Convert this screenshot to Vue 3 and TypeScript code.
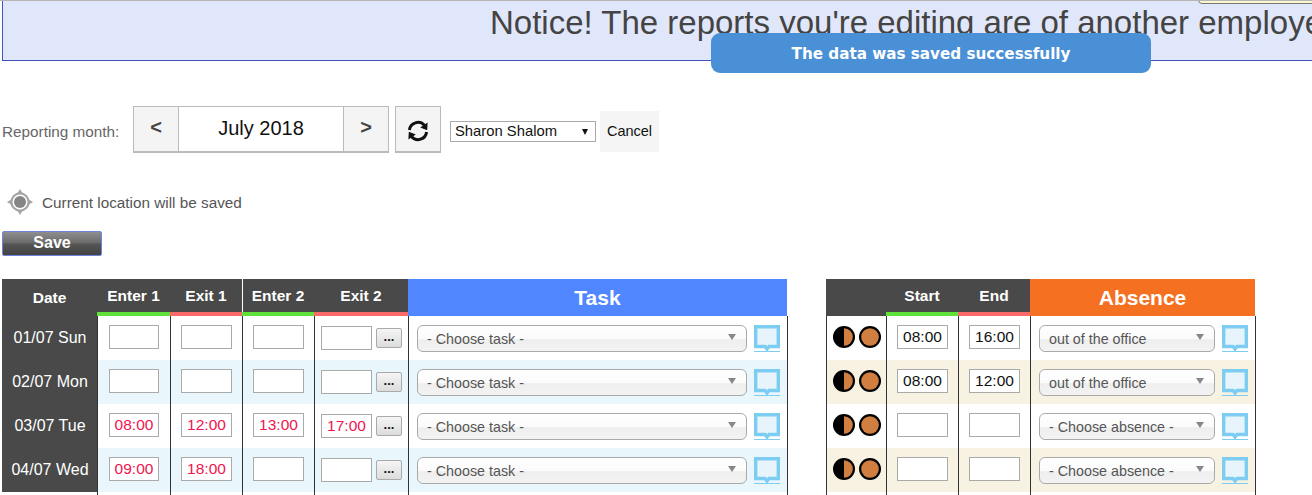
<script setup lang="ts">
interface WorkRow {
  date: string
  times: string[]
}
interface AbsenceRow {
  start: string
  end: string
  absence: string
}

const workRows: WorkRow[] = [
  { date: '01/07 Sun', times: ['', '', '', ''] },
  { date: '02/07 Mon', times: ['', '', '', ''] },
  { date: '03/07 Tue', times: ['08:00', '12:00', '13:00', '17:00'] },
  { date: '04/07 Wed', times: ['09:00', '18:00', '', ''] }
]

const absenceRows: AbsenceRow[] = [
  { start: '08:00', end: '16:00', absence: 'out of the office' },
  { start: '08:00', end: '12:00', absence: 'out of the office' },
  { start: '', end: '', absence: '- Choose absence -' },
  { start: '', end: '', absence: '- Choose absence -' }
]
</script>

<template>
  <div class="page">
    <div class="notice">Notice! The reports you're editing are of another employee</div>
    <div class="corner-tip"></div>
    <div class="toast">The data was saved successfully</div>

    <div class="month-row">
      <span class="month-label">Reporting month:</span>
      <div class="month-picker">
        <button class="nav-btn">&lt;</button>
        <div class="month-name">July 2018</div>
        <button class="nav-btn">&gt;</button>
      </div>
      <button class="refresh-btn">
        <svg width="24" height="24" viewBox="0 0 24 24" fill="none">
          <path d="M3.4 11A8.7 8.7 0 0 1 18.4 6.2" stroke="#111" stroke-width="3" />
          <path d="M21.6 3.6l-.4 7.6-7-2.6z" fill="#111" />
          <path d="M20.6 13A8.7 8.7 0 0 1 5.6 17.8" stroke="#111" stroke-width="3" />
          <path d="M2.4 20.4l.4-7.6 7 2.6z" fill="#111" />
        </svg>
      </button>
      <div class="employee-wrap">
        <select class="employee">
          <option>Sharon Shalom</option>
        </select>
      </div>
      <button class="cancel-btn">Cancel</button>
    </div>

    <div class="location">
      <svg width="26" height="26" viewBox="0 0 26 26">
        <path d="M13 0l2.5 4h-5zM13 26l-2.5-4h5zM0 13l4-2.5v5zM26 13l-4 2.5v-5z" fill="#a8a8a8" />
        <circle cx="13" cy="13" r="8.6" fill="none" stroke="#a5a5a5" stroke-width="2.2" />
        <circle cx="13" cy="13" r="6" fill="#858585" />
      </svg>
      <span>Current location will be saved</span>
    </div>

    <button class="save-btn">Save</button>

    <div class="tables">
      <table class="grid work">
        <colgroup>
          <col style="width: 95px" />
          <col style="width: 73px" />
          <col style="width: 72px" />
          <col style="width: 72px" />
          <col style="width: 94px" />
          <col style="width: 380px" />
        </colgroup>
        <thead>
          <tr>
            <th class="date-head">Date</th>
            <th class="enter">Enter 1</th>
            <th class="exit">Exit 1</th>
            <th class="enter split">Enter 2</th>
            <th class="exit">Exit 2</th>
            <th class="big task-head">Task</th>
          </tr>
        </thead>
        <tbody>
          <tr v-for="row in workRows" :key="row.date">
            <td class="date-cell">{{ row.date }}</td>
            <td v-for="i in 3" :key="i" class="time-cell">
              <input class="time late" :value="row.times[i - 1]" />
            </td>
            <td class="last-time">
              <div class="last-line">
                <input class="time late" :value="row.times[3]" />
                <button class="more-btn">...</button>
              </div>
            </td>
            <td class="pick-cell">
              <div class="pick-line">
                <div class="pick task-pick">
                  <span>- Choose task -</span>
                  <i class="arrow"></i>
                </div>
                <svg class="note" width="26" height="27" viewBox="0 0 26 27">
                  <path d="M1.7 1.7h22.6v19.8H15l-2 2.5-2-2.5H1.7z" fill="#e8f4fb" stroke="#7dcdf2" stroke-width="3.4" />
                  <path d="M0 26.5h26" stroke="#7dcdf2" stroke-width="1" />
                </svg>
              </div>
            </td>
          </tr>
          <tr class="tail">
            <td class="date-cell"></td>
            <td></td>
            <td></td>
            <td></td>
            <td></td>
            <td></td>
          </tr>
        </tbody>
      </table>

      <table class="grid off">
        <colgroup>
          <col style="width: 60px" />
          <col style="width: 72px" />
          <col style="width: 72px" />
          <col style="width: 226px" />
        </colgroup>
        <thead>
          <tr>
            <th></th>
            <th class="enter">Start</th>
            <th class="exit">End</th>
            <th class="big absence-head">Absence</th>
          </tr>
        </thead>
        <tbody>
          <tr v-for="(row, idx) in absenceRows" :key="idx">
            <td class="moon-cell">
              <span class="moons">
                <svg width="22" height="22" viewBox="0 0 22 22">
                  <circle cx="11" cy="11" r="11" fill="#000" />
                  <path d="M11 2.2a8.8 8.8 0 0 1 0 17.6z" fill="#d17f41" />
                </svg>
                <svg width="22" height="22" viewBox="0 0 22 22">
                  <circle cx="11" cy="11" r="11" fill="#000" />
                  <circle cx="11" cy="11" r="8.8" fill="#d17f41" />
                </svg>
              </span>
            </td>
            <td class="time-cell"><input class="time" :value="row.start" /></td>
            <td class="time-cell"><input class="time" :value="row.end" /></td>
            <td class="pick-cell">
              <div class="pick-line">
                <div class="pick absence-pick">
                  <span>{{ row.absence }}</span>
                  <i class="arrow"></i>
                </div>
                <svg class="note" width="26" height="27" viewBox="0 0 26 27">
                  <path d="M1.7 1.7h22.6v19.8H15l-2 2.5-2-2.5H1.7z" fill="#e8f4fb" stroke="#7dcdf2" stroke-width="3.4" />
                  <path d="M0 26.5h26" stroke="#7dcdf2" stroke-width="1" />
                </svg>
              </div>
            </td>
          </tr>
          <tr class="tail">
            <td></td>
            <td></td>
            <td></td>
            <td></td>
          </tr>
        </tbody>
      </table>
    </div>
  </div>
</template>

<style>
html,
body {
  margin: 0;
  overflow: hidden;
  background: #fff;
}
</style>

<style scoped>
.page {
  position: relative;
  width: 1312px;
  height: 495px;
  overflow: hidden;
  border-top: 1px solid #b5b5b5;
  box-sizing: border-box;
  font-family: "Liberation Sans", Arial, sans-serif;
  color: #444;
}

.notice {
  margin-left: 2px;
  height: 60px;
  padding: 3px 0 0 487px;
  box-sizing: border-box;
  background: #e1e7fa;
  border-left: 1px solid #3f51c0;
  border-bottom: 1px solid #3f51c0;
  font-size: 33px;
  line-height: 38px;
  color: #444;
  white-space: nowrap;
  overflow: hidden;
}

.corner-tip {
  position: absolute;
  top: -8px;
  left: 1198px;
  width: 130px;
  height: 9px;
  background: #fbf7cf;
  border: 1px solid #777;
  border-radius: 4px;
}

.toast {
  position: absolute;
  top: 32px;
  left: 711px;
  width: 440px;
  height: 40px;
  line-height: 43px;
  background: #4a90d6;
  border-radius: 9px;
  color: #fff;
  font-family: "DejaVu Sans", sans-serif;
  font-weight: 700;
  font-size: 15.2px;
  text-align: center;
}

.month-row {
  display: flex;
  align-items: flex-start;
  margin-top: 45px;
  padding-left: 2px;
}

.month-label {
  margin-top: 17px;
  width: 131px;
  font-size: 15.3px;
  color: #666;
}

.month-picker {
  display: flex;
  width: 256px;
  height: 47px;
  box-sizing: border-box;
  border: 1px solid #bbb;
  border-bottom-width: 2px;
}

.nav-btn {
  width: 44px;
  padding: 0 0 3px;
  border: 0;
  background: #f4f4f4;
  font-family: inherit;
  font-weight: 700;
  font-size: 20px;
  color: #444;
}

.month-name {
  flex: 1;
  border-left: 1px solid #bbb;
  border-right: 1px solid #bbb;
  text-align: center;
  font-size: 20px;
  line-height: 43px;
  color: #111;
}

.refresh-btn {
  display: flex;
  align-items: center;
  justify-content: center;
  margin-left: 6px;
  width: 46px;
  height: 47px;
  padding: 3px 0 0;
  box-sizing: border-box;
  border: 1px solid #bbb;
  border-bottom-width: 2px;
  background: #f4f4f4;
}

.employee-wrap {
  position: relative;
  margin: 15px 0 0 9px;
  width: 146px;
  height: 21px;
}

.employee-wrap::after {
  content: "";
  position: absolute;
  top: 8px;
  right: 8px;
  border-left: 3.5px solid transparent;
  border-right: 3.5px solid transparent;
  border-top: 6px solid #111;
}

.employee {
  display: block;
  width: 146px;
  height: 21px;
  padding: 0 0 2px 4px;
  box-sizing: border-box;
  border: 1px solid #aaa;
  border-radius: 0;
  background: #fff;
  appearance: none;
  font-family: inherit;
  font-size: 14.8px;
  color: #111;
}

.cancel-btn {
  margin: 5px 0 0 4px;
  width: 59px;
  height: 41px;
  padding: 0 0 2px;
  border: 0;
  background: #f5f5f5;
  font-family: inherit;
  font-size: 14.5px;
  color: #111;
}

.location {
  display: flex;
  align-items: center;
  gap: 9px;
  margin: 36px 0 0 7px;
  font-size: 15.3px;
  color: #555;
}

.location span {
  margin-top: 2px;
}

.save-btn {
  display: block;
  margin: 16px 0 0 2px;
  width: 100px;
  height: 25px;
  padding: 0 0 2px;
  box-sizing: border-box;
  border: 1px solid #6f83dc;
  border-radius: 2px;
  background: linear-gradient(#8f8f8f, #6a6a6a 48%, #555 52%, #444);
  color: #fff;
  font-family: inherit;
  font-weight: 700;
  font-size: 16px;
}

.tables {
  display: flex;
  align-items: flex-start;
  gap: 38px;
  margin-top: 23px;
  padding-left: 2px;
}

.grid {
  table-layout: fixed;
  border-collapse: separate;
  border-spacing: 0;
}

.work {
  width: 786px;
}

.off {
  width: 430px;
}

th {
  height: 37px;
  padding: 0;
  box-sizing: border-box;
  background: #484948;
  color: #fff;
  font-size: 15.5px;
  font-weight: 700;
  border-bottom: 4px solid #484948;
}

.date-head {
  padding-top: 5px;
}

th.enter {
  border-bottom-color: #5fe13a;
}

th.exit {
  border-bottom-color: #f96b6b;
}

th.split {
  box-shadow: inset 1px 0 0 #fff;
}

th.big {
  padding: 1px 0 0;
  border-bottom: 0;
  border-right: 1px solid #fff;
  font-size: 21px;
}

.task-head {
  background: #5086ff;
}

.absence-head {
  background: #f57021;
}

td {
  height: 44px;
  padding: 0;
  box-sizing: border-box;
  vertical-align: top;
  border-left: 1px solid #333;
}

td:last-child {
  border-right: 1px solid #333;
}

.work tbody tr:nth-child(even) td {
  background: #e9f6fc;
}

.off tbody tr:nth-child(even) td {
  background: #f7f2e2;
}

.work tbody tr td.date-cell {
  padding-left: 1px;
  background: #484948;
  border-left: 0;
  color: #fff;
  font-size: 16px;
  line-height: 43px;
  text-align: center;
}

.tail td,
.work tbody tr.tail td,
.off tbody tr.tail td {
  background: #fff;
}

.time-cell {
  padding: 9px 0 0 10px;
}

.work td:nth-child(2) {
  padding-left: 11px;
}

.work td:nth-child(2) .time {
  width: 50px;
}

.last-time {
  padding: 10px 0 0 6px;
}

.last-line {
  display: flex;
  gap: 4px;
}

.time {
  display: block;
  width: 51px;
  height: 24px;
  padding: 0;
  box-sizing: border-box;
  border: 1px solid #aaa;
  background: #fff;
  font-family: inherit;
  font-size: 15.5px;
  color: #111;
  text-align: center;
}

.late {
  color: #f0134f;
}

.more-btn {
  width: 26px;
  height: 20px;
  margin-top: 2px;
  padding: 0 0 4px;
  box-sizing: border-box;
  border: 1px solid #aaa;
  border-radius: 2px;
  background: linear-gradient(#f5f5f5, #dcdcdc);
  font-family: inherit;
  font-weight: 700;
  font-size: 13px;
  color: #111;
}

.pick-cell {
  padding: 9px 0 0 8px;
}

.pick-line {
  display: flex;
  gap: 7px;
}

.pick {
  display: flex;
  align-items: center;
  justify-content: space-between;
  height: 27px;
  padding: 0 10px 0 9px;
  box-sizing: border-box;
  border: 1px solid #aaa;
  border-radius: 6px;
  background: linear-gradient(#fff, #fbfbfb 50%, #eee 55%, #f3f3f3);
  font-size: 14.3px;
  color: #555;
}

.task-pick {
  width: 330px;
}

.absence-pick {
  width: 176px;
}

.arrow {
  margin: 0 0 3px;
  border-left: 4px solid transparent;
  border-right: 4px solid transparent;
  border-top: 6px solid #888;
}

.note {
  display: block;
}

.moon-cell {
  padding: 10px 0 0 6px;
}

.moons {
  display: flex;
  gap: 4px;
}
</style>
